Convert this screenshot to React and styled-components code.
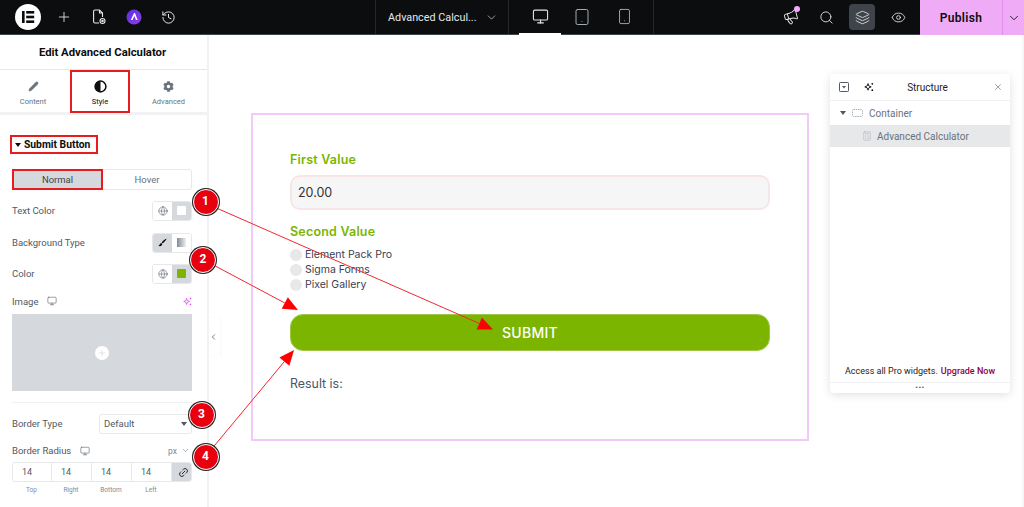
import React from "react";
import styled, { createGlobalStyle } from "styled-components";
import { Plus, History, Monitor, Tablet, Smartphone, Megaphone, Search, Layers, Eye, ChevronDown, ChevronLeft, Pencil, Globe, X, Link2, Calculator } from "lucide-react";
import { FaCog } from "react-icons/fa";

const Global = createGlobalStyle`
  html, body { margin: 0; padding: 0; background: #fff; overflow: hidden; }
  * { box-sizing: border-box; }
  body { font-family: Roboto, "Liberation Sans", sans-serif; }
`;

const Page = styled.div`
  position: relative; width: 1024px; height: 507px; display: flex; flex-direction: column; overflow: hidden;
`;
const TopBar = styled.header`
  height: 35px; flex: none; display: flex; align-items: stretch; background: #0c0d0e; border-bottom: 1px solid #3f444b; color: #fff;
`;
const LeftGroup = styled.div`
  width: 375px; display: flex; align-items: center; padding-left: 15px; flex: none;
`;
const Logo = styled.div`
  width: 26px; height: 26px; border-radius: 50%; background: #fff; display: flex; align-items: center; justify-content: center; margin-right: 5px;
`;
const Slot = styled.div`
  width: ${p => p.$w || 35}px; display: flex; align-items: center; justify-content: center; flex: none; position: relative; height: 100%;
`;
const TitleGroup = styled.div`
  width: 134px; flex: none; display: flex; align-items: center; justify-content: space-between; padding: 0 10px 0 12px;
  border-left: 1px solid #24272b; border-right: 1px solid #24272b; font-size: 10.8px; color: #e6e8ea; white-space: nowrap;
`;
const DeviceGroup = styled.div`
  width: 145px; flex: none; display: flex; padding-left: 10px; border-right: 1px solid #24272b;
`;
const DeviceTab = styled.div`
  width: 42px; display: flex; align-items: center; justify-content: center; border-bottom: 2px solid ${p => (p.$on ? "#fff" : "transparent")};
  color: ${p => (p.$on ? "#e6e8ea" : "#b5bcc4")}; margin-bottom: -1px;
`;
const RightGroup = styled.div`
  flex: 1; display: flex; align-items: center; justify-content: flex-end; padding-right: 4px;
`;
const ToolButton = styled.div`
  width: 26px; height: 26px; border-radius: 4px; display: flex; align-items: center; justify-content: center; background: #3f444b;
`;
const Dot = styled.span`
  position: absolute; top: 6px; right: 9px; width: 6px; height: 6px; border-radius: 50%; background: #f0abfc;
`;
const Publish = styled.div`
  width: 82px; flex: none; background: #f0abf7; color: #0c0d0e; font-weight: 600; font-size: 12px; letter-spacing: .3px; display: flex; align-items: center; justify-content: center; margin-bottom: -1px;
`;
const PublishMore = styled.div`
  width: 22px; flex: none; background: #f0abf7; border-left: 1px solid #e38eea; display: flex; align-items: center; justify-content: center; color: #0c0d0e; margin-bottom: -1px;
`;

const Main = styled.div` flex: 1; display: flex; min-height: 0; `;
const Sidebar = styled.aside`
  width: 209px; flex: none; display: flex; flex-direction: column; border-right: 2px solid #f1f2f3; background: #fff;
`;
const SideTitle = styled.div`
  height: 35px; flex: none; display: flex; align-items: center; justify-content: center; padding-right: 2px; font-size: 11.3px; font-weight: 700; color: #0c0d0e; border-bottom: 1px solid #e6e8ea;
`;
const Tabs = styled.div`
  height: 45px; flex: none; display: grid; grid-template-columns: 69px 61px 1fr; border-bottom: 3px solid #f1f2f3;
`;
const Tab = styled.div`
  display: flex; flex-direction: column; align-items: center; justify-content: flex-start; gap: 4px; padding-top: ${p => (p.$on ? 8 : 10)}px; padding-right: ${p => p.$pr || 0}px; font-size: 7.5px; line-height: 9px; color: ${p => (p.$on ? "#0c0d0e" : "#69727d")};
  ${p => p.$on && "border: 2px solid #e81c1c; margin-bottom: -1px; margin-left: 1px;"}
`;
const TabIcon = styled.span` height: 13px; display: flex; align-items: center; `;
const Controls = styled.div`
  display: flex; flex-direction: column; padding: 20px 15px 0 12px; flex: 1; color: #515962; font-size: 9.5px;
`;
const SectionHead = styled.div`
  align-self: flex-start; height: 19px; width: 88px; margin-left: -2px; border: 2px solid #e81c1c; display: flex; align-items: center; gap: 3px; padding-left: 3px; font-size: 10.3px; font-weight: 700; color: #0c0d0e;
`;
const Caret = styled.span`
  width: 0; height: 0; border-left: 3px solid transparent; border-right: 3px solid transparent; border-top: 4px solid ${p => p.$c || "#0c0d0e"}; flex: none;
`;
const Switch = styled.div`
  margin-top: 15px; height: 21px; display: grid; grid-template-columns: 90px 1fr; border: 1px solid #e6e8ea; border-radius: 3px; font-size: 9.5px;
`;
const SwitchOpt = styled.div`
  display: flex; align-items: center; justify-content: center; color: ${p => (p.$on ? "#3f444b" : "#69727d")};
  ${p => p.$on && "background: #d5d8dc; border: 2px solid #e81c1c; margin: -1px 0 -1px -1px;"}
`;
const Row = styled.div`
  display: flex; align-items: center; justify-content: space-between; height: 21px; margin-top: ${p => p.$mt}px;
`;
const Group = styled.div`
  display: flex; width: 40px; height: 20px; border: 1px solid #e6e8ea; border-radius: 3px; overflow: hidden;
`;
const GroupCell = styled.div`
  flex: 1; display: flex; align-items: center; justify-content: center; background: ${p => (p.$on ? "#d5d8dc" : "#fff")}; color: #515962;
`;
const Swatch = styled.span`
  width: 9px; height: 9px; border-radius: 1px; background: ${p => p.$c};
`;
const Label = styled.span` display: flex; align-items: center; gap: 9px; `;
const ImageRow = styled.div`
  display: flex; align-items: center; justify-content: space-between; height: 14px; margin-top: 10px;
`;
const ImageBox = styled.div`
  height: 77px; margin-top: 6px; background: #d5d8dc; display: flex; align-items: center; justify-content: center;
`;
const PlusDot = styled.span`
  width: 14px; height: 14px; border-radius: 50%; background: #fff; display: flex; align-items: center; justify-content: center; color: #d5d8dc;
`;
const Divider = styled.div` height: 1px; background: #eef0f1; margin-top: 11px; `;
const Select = styled.div`
  width: 93px; height: 20px; border: 1px solid #e6e8ea; border-radius: 3px; display: flex; align-items: center; justify-content: space-between; padding: 0 4px; font-size: 9.5px; color: #515962;
`;
const Unit = styled.span` display: flex; align-items: center; gap: 4px; font-size: 8.5px; color: #818a96; padding-right: 2px; `;
const Dims = styled.div`
  display: grid; grid-template-columns: 39px 40px 40px 40px 22px; height: 20px; margin-top: 1px; border: 1px solid #e6e8ea; border-radius: 3px; overflow: hidden;
`;
const DimCell = styled.div`
  display: flex; align-items: center; padding-left: 9px; font-size: 9px; color: #515962; border-right: 1px solid #e6e8ea;
`;
const LinkCell = styled.div`
  background: #d5d8dc; display: flex; align-items: center; justify-content: center; color: #0c0d0e;
`;
const DimLabels = styled.div`
  display: grid; grid-template-columns: 39px 40px 40px 40px; margin-top: 4px; font-size: 6.5px; color: #818a96; text-align: center;
`;

const Canvas = styled.main` flex: 1; position: relative; border-right: 2px solid #f6f6f6; `;
const CollapseHandle = styled.div`
  position: absolute; left: 0; top: 283px; width: 11px; height: 38px; background: #fff; display: flex; align-items: center; justify-content: center; padding-right: 2px; color: #3f444b; box-shadow: 1px 0 2px rgba(0,0,0,.04);
`;
const Container = styled.section`
  margin: 78px 0 0 42px; width: 558px; height: 328px; border: 2px solid #f3c9fa; padding: 36px 37px 0 37px;
  font-family: Inter, "Liberation Sans", sans-serif; display: flex; flex-direction: column;
`;
const FieldLabel = styled.div`
  font-size: 12.5px; line-height: 18px; font-weight: 600; color: #7cb500; letter-spacing: .2px; margin-top: ${p => p.$mt || 0}px;
`;
const Input = styled.div`
  height: 35px; margin-top: 6px; background: #f6f6f6; border: 2px solid #f8e6e6; border-radius: 10px; display: flex; align-items: center; padding-left: 6px; font-size: 12.5px; color: #333;
`;
const RadioList = styled.div` display: flex; flex-direction: column; margin-top: 6px; `;
const Radio = styled.label`
  height: 15px; display: flex; align-items: center; gap: 3px; font-size: 10.5px; color: #3a4050;
`;
const RadioDot = styled.span` width: 12px; height: 12px; border-radius: 50%; background: #e8e8e8; flex: none; `;
const Submit = styled.div`
  height: 37px; margin-top: 22px; background: #7cb500; border: 1px solid #9ec74a; border-radius: 13px; color: #fff; font-size: 14px; font-weight: 500; letter-spacing: .3px; display: flex; align-items: center; justify-content: center;
`;
const Result = styled.div` margin-top: 24px; font-size: 12.4px; line-height: 18px; color: #4a5568; `;

const Structure = styled.aside`
  position: absolute; top: 39px; right: 12px; width: 180px; height: 319px; background: #fff; border-radius: 4px; box-shadow: 0 2px 10px rgba(0,0,0,.12); display: flex; flex-direction: column; font-size: 10px; color: #515962;
`;
const StructHead = styled.div`
  height: 27px; flex: none; display: grid; grid-template-columns: 26px 24px 93px 1fr; align-items: center; justify-items: center; border-bottom: 1px solid #eef0f1; color: #0c0d0e; padding-left: 1px;
`;
const StructTitle = styled.span` font-size: 10px; color: #1f2124; `;
const StructClose = styled.span` justify-self: end; margin-right: 7px; display: flex; `;
const TreeRow = styled.div`
  height: ${p => p.$h}px; flex: none; display: flex; align-items: center; gap: ${p => p.$gap}px; padding-left: ${p => p.$indent}px; background: ${p => (p.$on ? "#e6e8ea" : "transparent")}; color: #69727d;
`;
const StructFoot = styled.div`
  margin-top: auto; display: flex; justify-content: center; gap: 3px; padding-bottom: 6px; font-size: 9px; color: #1f2124; border-bottom: 1px solid #eef0f1;
`;
const Upgrade = styled.span` color: #93003f; font-weight: 500; `;
const Grip = styled.div`
  height: 10px; flex: none; display: flex; align-items: center; justify-content: center; font-size: 8px; line-height: 6px; color: #515962; letter-spacing: .5px;
`;

const Overlay = styled.svg` position: absolute; inset: 0; pointer-events: none; `;
const Badge = styled.div`
  position: absolute; left: ${p => p.$x - 13}px; top: ${p => p.$y - 13}px; width: 26px; height: 26px; border-radius: 50%; background: #e8000f; border: 1.5px solid #fff; box-shadow: 0 0 0 1px #222;
  color: #fff; font: 700 12px/23px Roboto, sans-serif; text-align: center;
`;

const ElementorMark = () => (
  <svg width="14" height="14" viewBox="0 0 14 14" fill="#0c0d0e"><rect x="1" y="1" width="2.6" height="12" /><rect x="5.2" y="1" width="8" height="2.6" /><rect x="5.2" y="5.7" width="8" height="2.6" /><rect x="5.2" y="10.4" width="8" height="2.6" /></svg>
);
const DocIcon = () => (
  <svg width="14" height="16" viewBox="0 0 14 16" fill="none" stroke="#e6e8ea" strokeWidth="1.1"><path d="M7 14H3a1.4 1.4 0 0 1-1.4-1.4V2.4A1.4 1.4 0 0 1 3 1h4.5l3 3v4" /><path d="M7.5 1v3h3" /><circle cx="10.5" cy="12" r="2.5" /><circle cx="10.5" cy="12" r=".7" fill="#e6e8ea" /></svg>
);
const Astra = () => (
  <svg width="16" height="16" viewBox="0 0 16 16"><defs><linearGradient id="ag" x1="0" y1="0" x2="1" y2="1"><stop offset="0" stopColor="#5b2fe0" /><stop offset="1" stopColor="#8d3ee8" /></linearGradient></defs><circle cx="8" cy="8" r="7.5" fill="url(#ag)" /><path d="M8 4 4.8 11h1.7L8.4 6.9 10 11h1.6L9 4Z" fill="#fff" /></svg>
);
const HalfCircle = () => (
  <svg width="13" height="13" viewBox="0 0 13 13"><circle cx="6.5" cy="6.5" r="5.4" fill="#fff" stroke="#0c0d0e" strokeWidth="1.5" /><path d="M6.5 1a5.5 5.5 0 0 0 0 11Z" fill="#0c0d0e" /></svg>
);
const Sparkle = ({ c = "#0c0d0e", s = 10 }) => (
  <svg width={s} height={s} viewBox="0 0 10 10" fill={c}><path d="M4 1.6 4.9 4l2.3.9-2.3.9L4 8.2l-.9-2.4L.8 4.9 3.1 4Z" fill="none" stroke={c} strokeWidth=".9" /><circle cx="8.3" cy="1.8" r=".9" /><circle cx="8.3" cy="8.2" r=".9" /></svg>
);
const Brush = () => (
  <svg width="9" height="9" viewBox="0 0 9 9" fill="#0c0d0e"><path d="M8.6.4C6.8 1 4.6 3 3.7 4.4l1 1C6 4.5 8 2.2 8.6.4ZM3.2 4.9C1.8 5 2 7.4.3 7.6c1.2 1 3.6.8 3.9-1.6Z" /></svg>
);
const Gradient = styled.span`
  width: 9px; height: 9px; background: linear-gradient(90deg, #818a96, #eef0f1);
`;
const CollapseBox = () => (
  <svg width="10" height="10" viewBox="0 0 10 10" fill="none" stroke="#515962"><rect x=".5" y=".5" width="9" height="9" rx=".8" /><path d="M3 4h4L5 6.4Z" fill="#515962" stroke="none" /></svg>
);
const ContainerIcon = () => (
  <svg width="11" height="8" viewBox="0 0 11 8" fill="none" stroke="#a4afb7" strokeDasharray="1.5 .8"><rect x=".5" y=".5" width="10" height="7" rx="1" /></svg>
);

const arrows = [
  { from: [205, 203], to: [493, 329.5] },
  { from: [204, 260], to: [298, 310] },
  { from: [205, 457], to: [294, 350] },
];

const Arrow = ({ from, to }) => {
  const a = Math.atan2(to[1] - from[1], to[0] - from[0]);
  const L = 15, W = 6.5;
  const bx = to[0] - L * Math.cos(a), by = to[1] - L * Math.sin(a);
  const nx = -Math.sin(a) * W, ny = Math.cos(a) * W;
  return (
    <g>
      <line x1={from[0]} y1={from[1]} x2={bx} y2={by} stroke="#f0282d" strokeWidth="1" />
      <polygon points={`${to[0]},${to[1]} ${bx + nx},${by + ny} ${bx - nx},${by - ny}`} fill="#f00" />
    </g>
  );
};

export default function App() {
  return (
    <Page>
      <Global />
      <TopBar>
        <LeftGroup>
          <Logo><ElementorMark /></Logo>
          <Slot><Plus size={16} strokeWidth={1.3} color="#e6e8ea" /></Slot>
          <Slot><DocIcon /></Slot>
          <Slot><Astra /></Slot>
          <Slot><History size={15} strokeWidth={1.6} color="#e6e8ea" /></Slot>
        </LeftGroup>
        <TitleGroup>
          <span>Advanced Calcul...</span>
          <ChevronDown size={13} strokeWidth={1.3} color="#d5d8dc" />
        </TitleGroup>
        <DeviceGroup>
          <DeviceTab $on><Monitor size={17} strokeWidth={1.5} /></DeviceTab>
          <DeviceTab><Tablet size={18} strokeWidth={1.2} /></DeviceTab>
          <DeviceTab><Smartphone size={17} strokeWidth={1.2} /></DeviceTab>
        </DeviceGroup>
        <RightGroup>
          <Slot $w={36}><Megaphone size={16} strokeWidth={1.4} color="#e6e8ea" transform="rotate(-15)" /><Dot /></Slot>
          <Slot $w={35}><Search size={15} strokeWidth={1.4} color="#e6e8ea" /></Slot>
          <Slot $w={36}><ToolButton><Layers size={15} strokeWidth={1.3} color="#e6e8ea" /></ToolButton></Slot>
          <Slot $w={36}><Eye size={15} strokeWidth={1.4} color="#e6e8ea" /></Slot>
        </RightGroup>
        <Publish>Publish</Publish>
        <PublishMore><ChevronDown size={14} strokeWidth={1.5} /></PublishMore>
      </TopBar>
      <Main>
        <Sidebar>
          <SideTitle>Edit Advanced Calculator</SideTitle>
          <Tabs>
            <Tab $pr={3}><TabIcon><Pencil size={11} fill="#69727d" strokeWidth={1.2} /></TabIcon>Content</Tab>
            <Tab $on><TabIcon><HalfCircle /></TabIcon>Style</Tab>
            <Tab><TabIcon><FaCog size={11} color="#69727d" /></TabIcon>Advanced</Tab>
          </Tabs>
          <Controls>
            <SectionHead><Caret />Submit Button</SectionHead>
            <Switch>
              <SwitchOpt $on>Normal</SwitchOpt>
              <SwitchOpt>Hover</SwitchOpt>
            </Switch>
            <Row $mt={10}>
              <span>Text Color</span>
              <Group><GroupCell><Globe size={10} strokeWidth={1.3} /></GroupCell><GroupCell $on><Swatch $c="#fff" /></GroupCell></Group>
            </Row>
            <Row $mt={11}>
              <span>Background Type</span>
              <Group><GroupCell $on><Brush /></GroupCell><GroupCell><Gradient /></GroupCell></Group>
            </Row>
            <Row $mt={10}>
              <span>Color</span>
              <Group><GroupCell><Globe size={10} strokeWidth={1.3} /></GroupCell><GroupCell $on><Swatch $c="#7cb500" /></GroupCell></Group>
            </Row>
            <ImageRow>
              <Label>Image <Monitor size={10} strokeWidth={1.4} /></Label>
              <Sparkle c="#d946ef" s={9} />
            </ImageRow>
            <ImageBox><PlusDot><Plus size={10} strokeWidth={1.6} /></PlusDot></ImageBox>
            <Divider />
            <Row $mt={10}>
              <span>Border Type</span>
              <Select>Default<Caret $c="#515962" /></Select>
            </Row>
            <Row $mt={6}>
              <Label>Border Radius <Monitor size={10} strokeWidth={1.4} /></Label>
              <Unit>px <ChevronDown size={9} strokeWidth={1.8} /></Unit>
            </Row>
            <Dims>
              <DimCell>14</DimCell><DimCell>14</DimCell><DimCell>14</DimCell><DimCell>14</DimCell>
              <LinkCell><Link2 size={11} strokeWidth={1.8} transform="rotate(-45)" /></LinkCell>
            </Dims>
            <DimLabels><span>Top</span><span>Right</span><span>Bottom</span><span>Left</span></DimLabels>
          </Controls>
        </Sidebar>
        <Canvas>
          <Container>
            <FieldLabel>First Value</FieldLabel>
            <Input>20.00</Input>
            <FieldLabel $mt={13}>Second Value</FieldLabel>
            <RadioList>
              <Radio><RadioDot />Element Pack Pro</Radio>
              <Radio><RadioDot />Sigma Forms</Radio>
              <Radio><RadioDot />Pixel Gallery</Radio>
            </RadioList>
            <Submit>SUBMIT</Submit>
            <Result>Result is:</Result>
          </Container>
          <CollapseHandle><ChevronLeft size={10} strokeWidth={1.8} /></CollapseHandle>
          <Structure>
            <StructHead>
              <CollapseBox />
              <Sparkle />
              <StructTitle>Structure</StructTitle>
              <StructClose><X size={10} strokeWidth={1.3} color="#515962" /></StructClose>
            </StructHead>
            <TreeRow $h={24} $indent={10} $gap={6}><Caret $c="#515962" /><ContainerIcon />Container</TreeRow>
            <TreeRow $h={22} $on $indent={32} $gap={5}><Calculator size={10} strokeWidth={1.2} color="#a4afb7" />Advanced Calculator</TreeRow>
            <StructFoot>Access all Pro widgets. <Upgrade>Upgrade Now</Upgrade></StructFoot>
            <Grip>•••</Grip>
          </Structure>
        </Canvas>
      </Main>
      <Overlay width="1024" height="507">
        {arrows.map((a, i) => <Arrow key={i} {...a} />)}
      </Overlay>
      <Badge $x={205.5} $y={202}>1</Badge>
      <Badge $x={203} $y={260}>2</Badge>
      <Badge $x={201.5} $y={415}>3</Badge>
      <Badge $x={205.5} $y={457}>4</Badge>
    </Page>
  );
}
